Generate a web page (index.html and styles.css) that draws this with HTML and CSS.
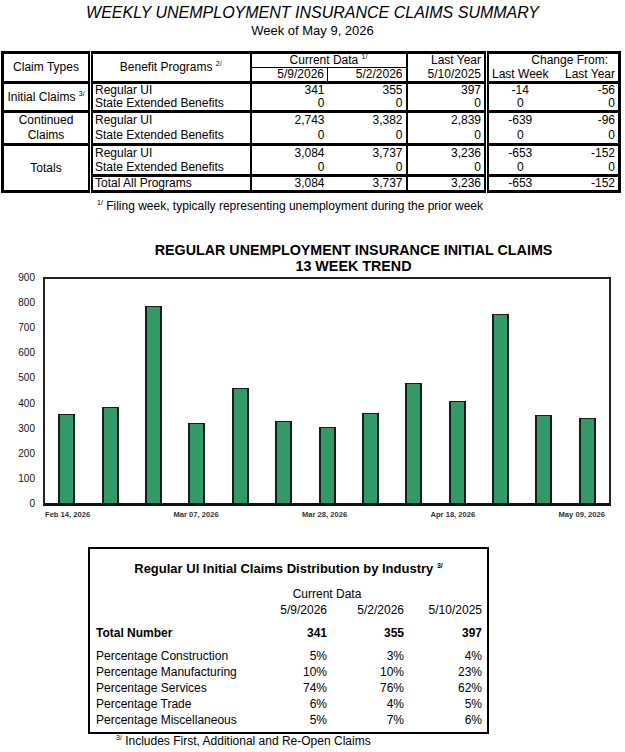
FILE: index.html
```html
<!DOCTYPE html>
<html lang="en">
<head>
  <meta charset="UTF-8" />
  <title>Weekly Unemployment Insurance Claims Summary</title>
  <link rel="stylesheet" href="styles.css">
</head>
<body>

  <h1 class="title">WEEKLY UNEMPLOYMENT INSURANCE CLAIMS SUMMARY</h1>
  <div class="subtitle">Week of May 9, 2026</div>

  <table class="summary">
    <colgroup>
      <col style="width:88px"><col style="width:160px"><col style="width:77px"><col style="width:79px">
      <col style="width:80px"><col style="width:65px"><col style="width:68px">
    </colgroup>
    <tr class="head1">
      <th rowspan="2" class="type">Claim Types</th>
      <th rowspan="2" class="prog">Benefit Programs <sup>2/</sup></th>
      <th colspan="2" class="cur">Current Data <sup>1/</sup></th>
      <th class="ly num">Last Year</th>
      <th colspan="2" class="chg">Change From:</th>
    </tr>
    <tr class="head2">
      <th class="num d1">5/9/2026</th>
      <th class="num d2">5/2/2026</th>
      <th class="num ly">5/10/2025</th>
      <th class="lw">Last Week</th>
      <th class="num">Last Year</th>
    </tr>

    <tr class="group g-init">
      <td rowspan="2" class="type">Initial Claims <sup>3/</sup></td>
      <td class="prog">Regular UI</td>
      <td class="num">341</td><td class="num d2">355</td><td class="num ly">397</td>
      <td class="lw">-14</td><td class="num">-56</td>
    </tr>
    <tr class="g-init">
      <td class="prog">State Extended Benefits</td>
      <td class="num">0</td><td class="num d2">0</td><td class="num ly">0</td>
      <td class="lw">0</td><td class="num">0</td>
    </tr>

    <tr class="group g-cont">
      <td rowspan="2" class="type">Continued Claims</td>
      <td class="prog">Regular UI</td>
      <td class="num">2,743</td><td class="num d2">3,382</td><td class="num ly">2,839</td>
      <td class="lw">-639</td><td class="num">-96</td>
    </tr>
    <tr class="g-cont">
      <td class="prog">State Extended Benefits</td>
      <td class="num">0</td><td class="num d2">0</td><td class="num ly">0</td>
      <td class="lw">0</td><td class="num">0</td>
    </tr>

    <tr class="group g-tot">
      <td rowspan="3" class="type">Totals</td>
      <td class="prog">Regular UI</td>
      <td class="num">3,084</td><td class="num d2">3,737</td><td class="num ly">3,236</td>
      <td class="lw">-653</td><td class="num">-152</td>
    </tr>
    <tr class="g-tot">
      <td class="prog">State Extended Benefits</td>
      <td class="num">0</td><td class="num d2">0</td><td class="num ly">0</td>
      <td class="lw">0</td><td class="num">0</td>
    </tr>
    <tr class="all">
      <td class="prog">Total All Programs</td>
      <td class="num">3,084</td><td class="num d2">3,737</td><td class="num ly">3,236</td>
      <td class="lw">-653</td><td class="num">-152</td>
    </tr>
  </table>

  <p class="note1"><sup>1/</sup> Filing week, typically representing unemployment during the prior week</p>

  <div class="chart-title">REGULAR UNEMPLOYMENT INSURANCE INITIAL CLAIMS<br>13 WEEK TREND</div>

  <div class="chart-row">
    <div class="ylabels">
      <span>900</span><span>800</span><span>700</span><span>600</span><span>500</span>
      <span>400</span><span>300</span><span>200</span><span>100</span><span>0</span>
    </div>
    <div class="plot" id="plot"></div>
  </div>
  <div class="xlabels" id="xlabels"></div>

  <div class="dist">
    <div class="dist-title">Regular UI Initial Claims Distribution by Industry <sup>3/</sup></div>
    <table class="dist-table">
      <colgroup>
        <col style="width:154px"><col style="width:77px"><col style="width:77px"><col style="width:78px">
      </colgroup>
      <tr>
        <td></td><td colspan="2" class="center">Current Data</td><td></td>
      </tr>
      <tr>
        <td></td><td class="num">5/9/2026</td><td class="num">5/2/2026</td><td class="num">5/10/2025</td>
      </tr>
      <tr class="total">
        <td>Total Number</td><td class="num">341</td><td class="num">355</td><td class="num">397</td>
      </tr>
      <tr class="first">
        <td>Percentage Construction</td><td class="num">5%</td><td class="num">3%</td><td class="num">4%</td>
      </tr>
      <tr>
        <td>Percentage Manufacturing</td><td class="num">10%</td><td class="num">10%</td><td class="num">23%</td>
      </tr>
      <tr>
        <td>Percentage Services</td><td class="num">74%</td><td class="num">76%</td><td class="num">62%</td>
      </tr>
      <tr>
        <td>Percentage Trade</td><td class="num">6%</td><td class="num">4%</td><td class="num">5%</td>
      </tr>
      <tr>
        <td>Percentage Miscellaneous</td><td class="num">5%</td><td class="num">7%</td><td class="num">6%</td>
      </tr>
    </table>
  </div>

  <p class="note3"><sup>3/</sup> Includes First, Additional and Re-Open Claims</p>

  <script>
    const haftalar = [
      { tarih: "Feb 14, 2026", deger: 358 },
      { tarih: "", deger: 385 },
      { tarih: "", deger: 791 },
      { tarih: "Mar 07, 2026", deger: 322 },
      { tarih: "", deger: 462 },
      { tarih: "", deger: 330 },
      { tarih: "Mar 28, 2026", deger: 304 },
      { tarih: "", deger: 362 },
      { tarih: "", deger: 482 },
      { tarih: "Apr 18, 2026", deger: 411 },
      { tarih: "", deger: 760 },
      { tarih: "", deger: 355 },
      { tarih: "May 09, 2026", deger: 341 },
    ];

    const plot = document.getElementById("plot");
    const xlabels = document.getElementById("xlabels");
    const yukseklik = 224;

    haftalar.forEach(h => {
      const slot = document.createElement("div");
      slot.className = "slot";
      const bar = document.createElement("div");
      bar.className = "bar";
      bar.style.height = Math.round(h.deger / 900 * yukseklik) + "px";
      slot.appendChild(bar);
      plot.appendChild(slot);

      const lab = document.createElement("div");
      lab.className = "xslot";
      lab.innerHTML = `<span>${h.tarih}</span>`;
      xlabels.appendChild(lab);
    });
  </script>

</body>
</html>
```

FILE: styles.css
```css
body {
  margin: 0;
  width: 625px;
  font-family: "Liberation Sans", Arial, sans-serif;
  color: #000;
  background-color: #fff;
}
sup {
  font-size: 7px;
  line-height: 0;
  vertical-align: 5px;
}
.title {
  margin: 4px 0 0;
  font-size: 16px;
  font-style: italic;
  font-weight: normal;
  line-height: 18px;
  text-align: center;
}
.subtitle {
  margin-top: 1px;
  font-size: 13px;
  line-height: 15px;
  text-align: center;
}

/* ust tablo */
.summary {
  margin: 13px 0 0 1px;
  border-collapse: collapse;
  table-layout: fixed;
  width: 617px;
  border: 3px solid #000;
  font-size: 12px;
}
.summary th, .summary td {
  padding: 0 3px;
  font-weight: normal;
  line-height: 13px;
  height: 13px;
  white-space: nowrap;
}
.summary .type {
  text-align: center;
  white-space: normal;
  border-right: 5px double #000;
}
.summary .prog {
  text-align: left;
  padding-left: 2px;
  border-right: 2px solid #000;
}
.summary th.prog {
  text-align: center;
}
.summary .num {
  text-align: right;
}
.summary .d2 {
  border-right: 2px solid #000;
}
.summary .ly {
  border-right: 5px double #000;
}
.summary .lw {
  text-align: center;
}
.summary .cur {
  text-align: center;
  border-bottom: 1px solid #000;
  border-right: 2px solid #000;
}
.summary .d1 {
  border-right: 1px solid #000;
}
.summary .chg {
  text-align: right;
  padding-right: 10px;
}
.summary .group td {
  border-top: 3px solid #000;
}
.summary .g-cont td {
  height: 15px;
  line-height: 15px;
}
.summary .g-tot td {
  height: 14px;
}
.summary .all td {
  border-top: 3px solid #000;
}

.note1 {
  margin: 6px 0 0;
  padding-left: 97px;
  font-size: 12px;
  line-height: 14px;
}

/* grafik */
.chart-title {
  margin-top: 30px;
  padding-left: 82px;
  font-size: 14.3px;
  font-weight: bold;
  line-height: 15.5px;
  text-align: center;
}
.chart-row {
  display: flex;
  align-items: flex-start;
}
.ylabels {
  width: 35px;
  height: 236px;
  margin-top: -1px;
  margin-right: 8px;
  display: flex;
  flex-direction: column;
  justify-content: space-between;
  align-items: flex-end;
  font-size: 10px;
  line-height: 10px;
  color: #111;
}
.plot {
  width: 564px;
  height: 224px;
  margin-top: 3px;
  box-sizing: content-box;
  border: 2px solid #222;
  border-bottom: 3px solid #111;
  display: flex;
  align-items: flex-end;
}
.slot {
  flex: 1;
  display: flex;
  justify-content: center;
  align-items: flex-end;
}
.bar {
  width: 17px;
  box-sizing: border-box;
  border: 2px solid #1a1a1a;
  border-top-width: 1px;
  border-bottom: none;
  background-color: #339966;
}
.xlabels {
  margin: 1px 0 0 45px;
  width: 560px;
  display: flex;
}
.xslot {
  flex: 1;
  display: flex;
  justify-content: center;
  font-size: 7.6px;
  font-weight: bold;
  line-height: 10px;
  color: #333;
  white-space: nowrap;
}

/* dagilim kutusu */
.dist {
  margin: 27px 0 0 88px;
  width: 401px;
  box-sizing: border-box;
  border: 2px solid #000;
  padding: 12px 0 4px 6px;
}
.dist-title {
  font-size: 13px;
  font-weight: bold;
  line-height: 16px;
  text-align: center;
  padding-right: 6px;
}
.dist-table {
  margin-top: 9px;
  border-collapse: collapse;
  table-layout: fixed;
  font-size: 12px;
}
.dist-table td {
  padding: 0;
  height: 16px;
  line-height: 16px;
  white-space: nowrap;
}
.dist-table .num {
  text-align: right;
}
.dist-table .center {
  text-align: center;
}
.dist-table .total td {
  padding-top: 7px;
  font-weight: bold;
}
.dist-table .first td {
  padding-top: 7px;
}
.note3 {
  margin: 0;
  padding-left: 116px;
  font-size: 12px;
  line-height: 14px;
}
```
